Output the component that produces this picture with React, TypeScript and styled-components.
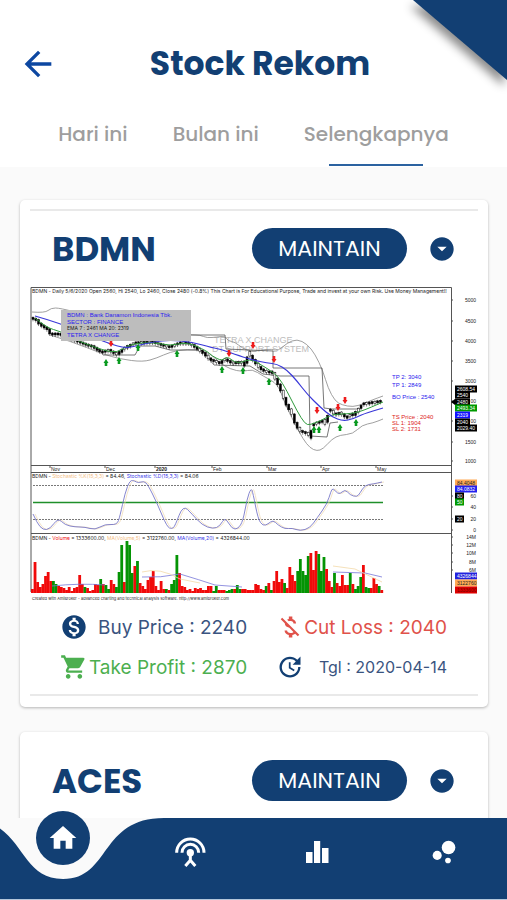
import React from "react";
import styled, { createGlobalStyle } from "styled-components";
import {
  MdArrowBack,
  MdArrowDropDownCircle,
  MdBubbleChart,
  MdHome,
  MdMoneyOff,
  MdMonetizationOn,
  MdShoppingCart,
  MdUpdate,
} from "react-icons/md";

const navy = "#123f73";
const heading = `Poppins, Inter, "Liberation Sans", sans-serif`;

const GlobalStyle = createGlobalStyle`
  * { box-sizing: border-box; }
  body { margin: 0; background: #fafafa; font-family: Inter, "Liberation Sans", sans-serif; }
  button { font: inherit; border: 0; padding: 0; background: none; cursor: pointer; }
`;

const Screen = styled.div`
  display: flex;
  flex-direction: column;
  height: 100vh;
  overflow: hidden;
  background: #fafafa;
`;

const Header = styled.header`
  position: relative;
  background: #fff;
  padding-top: 40px;
`;

const Corner = styled.svg`
  position: absolute;
  top: 0;
  right: 0;
  width: 94px;
  height: 80px;
  overflow: visible;
  filter: drop-shadow(-3px 6px 5px rgba(0, 0, 0, 0.45));
`;

const TitleRow = styled.div`
  display: flex;
  align-items: center;
  height: 47px;
  padding: 0 45px 0 18px;
`;

const BackButton = styled.button`
  display: flex;
  color: #0d47a1;
`;

const Title = styled.h1`
  flex: 1;
  margin: 0;
  text-align: center;
  font: 700 33px/48px ${heading};
  color: ${navy};
`;

const Tabs = styled.nav`
  display: flex;
  justify-content: center;
  gap: 45px;
  margin-top: 25px;
`;

const Tab = styled.button<{ $active?: boolean }>`
  display: flex;
  flex-direction: column;
  align-items: center;
  height: 55px;
  font: 500 20px/44px ${heading};
  color: #9e9e9e;

  &::after {
    content: "";
    width: 94px;
    height: 2px;
    margin-top: 8px;
    background: #2b62a0;
    display: ${(p) => (p.$active ? "block" : "none")};
  }
`;

const List = styled.main`
  flex: 1;
  min-height: 0;
  overflow-y: auto;
  scrollbar-width: none;
  display: flex;
  flex-direction: column;
  gap: 25px;
  padding: 33px 19px 0 20px;
`;

const Card = styled.article`
  flex: none;
  background: #fff;
  border-radius: 5px;
  padding: 9px 10px 11px;
  box-shadow: 0 1px 3px rgba(0, 0, 0, 0.28);
`;

const Divider = styled.hr<{ $hidden?: boolean }>`
  height: 2px;
  margin: 0;
  border: 0;
  background: ${(p) => (p.$hidden ? "transparent" : "#e9e9e9")};
`;

const CardHead = styled.div`
  display: flex;
  align-items: center;
  height: 75px;
  padding: 0 22px;
`;

const Ticker = styled.h2`
  flex: 1;
  margin: 0;
  font: 700 34px/48px ${heading};
  color: ${navy};
`;

const Pill = styled.button`
  width: 155px;
  height: 41px;
  border-radius: 21px;
  background: ${navy};
  color: #fff;
  font: 400 22px/41px ${heading};
`;

const Expand = styled.button`
  display: flex;
  margin-left: 21px;
  color: ${navy};
`;

const ChartSvg = styled.svg`
  display: block;
  width: 100%;
  height: auto;
  font-family: "Liberation Sans", sans-serif;
`;

const Facts = styled.div`
  display: grid;
  grid-template-columns: 188fr 170fr;
  column-gap: 29px;
  row-gap: 12px;
  padding: 10px 31px 13px 30px;
`;

const Fact = styled.div<{ $color: string; $small?: boolean }>`
  display: flex;
  align-items: center;
  justify-content: space-between;
  height: 28px;
  white-space: nowrap;
  font-size: ${(p) => (p.$small ? 16 : 19)}px;
  color: ${(p) => p.$color};

  svg { flex: none; }
`;

const BottomNav = styled.nav`
  position: relative;
  display: grid;
  grid-template-columns: repeat(4, 1fr);
  height: 82px;
  background: ${navy};
  border-bottom: 1px solid #b4c6da;
`;

const Notch = styled.svg`
  position: absolute;
  top: 0;
  left: calc(12.5% - 101px);
  width: 202px;
  height: 61px;
`;

const NavItem = styled.button`
  position: relative;
  display: flex;
  align-items: center;
  justify-content: center;
  height: 68px;
  color: #fff;
`;

const HomeItem = styled(NavItem)`
  justify-self: center;
  width: 54px;
  height: 54px;
  margin-top: -7px;
  border-radius: 50%;
  background: ${navy};
`;

type Point = [number, number];

const price: Point[] = [
  [2, 32], [8, 34], [12, 39], [20, 44], [22, 48], [30, 48], [50, 56], [58, 59], [65, 61], [72, 66], [80, 64],
  [87, 68], [95, 62], [105, 57], [123, 56], [133, 59], [140, 61], [150, 57], [160, 57], [168, 62], [176, 68],
  [182, 74], [190, 77], [196, 73], [203, 77], [215, 76], [220, 66], [225, 74], [232, 83], [238, 86], [244, 86],
  [250, 98], [254, 107], [258, 118], [264, 128], [268, 140], [273, 146], [280, 148], [284, 138], [290, 136],
  [296, 134], [301, 123], [306, 128], [312, 127], [317, 131], [325, 127], [333, 118], [340, 117], [353, 115],
];
const upperBand: Point[] = [
  [2, 26], [15, 27], [21, 22], [30, 22], [60, 30], [120, 45], [162, 49], [170, 49], [177, 52], [187, 51],
  [195, 50], [198, 55], [205, 56], [212, 62], [222, 66], [230, 64], [242, 63], [248, 65], [257, 57], [267, 53],
  [277, 58], [285, 68], [293, 85], [298, 102], [305, 115], [312, 119], [323, 121], [333, 118], [342, 114],
  [353, 110],
];
const lowerBand: Point[] = [
  [20, 49], [40, 55], [73, 68], [90, 73], [113, 76], [127, 72], [140, 66], [157, 63], [177, 65], [190, 77],
  [200, 83], [213, 86], [222, 83], [233, 90], [248, 98], [255, 118], [265, 138], [273, 153], [280, 162],
  [287, 165], [293, 163], [302, 153], [310, 149], [323, 148], [332, 139], [343, 137], [353, 133],
];
const upperSteps: Point[] = [
  [140, 49], [195, 49], [196, 63], [219, 64], [243, 65], [243, 82], [292, 82], [294, 122], [302, 123], [330, 123],
];
const lowerSteps: Point[] = [
  [73, 69], [105, 69], [110, 60], [125, 60], [140, 64], [172, 64], [184, 79], [220, 80], [233, 88], [250, 90],
  [279, 90], [280, 150], [297, 151], [300, 137], [308, 136],
];
const slowMa: Point[] = [
  [5, 30], [30, 37], [75, 56], [87, 60], [97, 62], [110, 59], [123, 56], [140, 54], [162, 56], [183, 62],
  [190, 63], [210, 70], [223, 74], [237, 77], [247, 78], [257, 84], [267, 95], [277, 108], [290, 121],
  [302, 131], [313, 135], [323, 133], [333, 128], [353, 122],
];
const fastMa: Point[] = [
  [5, 32], [17, 42], [30, 45], [50, 56], [73, 64], [87, 67], [100, 58], [123, 56], [140, 60], [157, 56],
  [177, 65], [182, 70], [192, 75], [197, 70], [207, 78], [220, 73], [228, 77], [238, 83], [248, 90], [257, 105],
  [267, 125], [275, 138], [280, 139], [292, 134], [303, 128], [317, 128], [330, 126], [353, 116],
];
const stochastic: Point[] = [
  [3, 228], [7, 237], [13, 244], [20, 243], [28, 232], [35, 239], [45, 241], [55, 241], [65, 244], [75, 238],
  [87, 239], [90, 230], [95, 207], [100, 194], [105, 195], [108, 197], [114, 195], [118, 199], [127, 217],
  [137, 241], [142, 243], [145, 240], [153, 219], [162, 228], [172, 239], [183, 243], [190, 240], [195, 231],
  [202, 243], [208, 243], [213, 235], [217, 213], [221, 202], [223, 207], [228, 233], [233, 240], [238, 238],
  [243, 234], [248, 239], [255, 243], [262, 242], [270, 245], [280, 242], [287, 232], [297, 218], [301, 205],
  [303, 202], [309, 209], [315, 203], [320, 209], [327, 211], [330, 207], [335, 199], [343, 198], [352, 196],
];
const buys: Point[] = [
  [76, 77], [89, 75], [108, 62], [147, 68], [192, 84], [213, 85], [239, 96], [284, 144], [289, 144], [310, 142],
  [326, 137],
];
const sells: Point[] = [[81, 57], [199, 67], [223, 59], [244, 73], [287, 124], [308, 121], [315, 114]];

/* Volume heights; the letter is the bar colour. */
const volume = (
  "4r 31r 11r 6r 9r 17r 21r 12r 12g 9g 7r 6r 5r 3r 6r 2r 5r 6r 18r 9r 6g 5r 2r 3r 9r 8r 14g 9r 8g 4g 13r 9r 6g " +
  "21g 48g 11r 52g 48g 20g 27r 32g 10r 7r 4r 13r 16r 22r 7r 3r 12r 4r 4g 3r 9g 13g 38g 20r 7r 6r 3r 4r 2r 5r 4r " +
  "5r 3r 3r 7r 7r 2g 7g 3r 3r 3r 2g 3g 4g 4r 8g 4g 4r 4r 3r " +
  "3r 3r 9r 8r 4r 3r 7g 10r 3g 12r 22r 11r 14r 10g 5r 26r 18r 12r 22g 34g 22g 18g 37g 40r 23r 42r 39g 22g 36g " +
  "24r 12r 6r 20g 10r 7r 18r 8r 8r 20g 9r 4g 7g 16g 28r 6g 5g 5r 15r 9r 7g 3r"
).split(" ");

const path = (pts: Point[], dx = 0) => pts.map(([x, y], i) => `${i ? "L" : "M"}${x + dx} ${y}`).join("");

/* Smooth line through the midpoints of the given points. */
const curve = (pts: Point[], dx = 0) => {
  const last = pts[pts.length - 1];
  const mids = pts.slice(1, -1).map(([x, y], i) => {
    const [nx, ny] = pts[i + 2];
    return `Q${x + dx} ${y} ${(x + nx) / 2 + dx} ${(y + ny) / 2}`;
  });
  return `M${pts[0][0] + dx} ${pts[0][1]}${mids.join("")}L${last[0] + dx} ${last[1]}`;
};

const priceAt = (x: number) => {
  const i = Math.max(1, price.findIndex((p) => p[0] >= x));
  const [ax, ay] = price[i - 1];
  const [bx, by] = price[i];
  return ay + ((by - ay) * (x - ax)) / (bx - ax);
};

const candles = Array.from({ length: 126 }, (_, i) => {
  const x = 3 + i * 2.78;
  const y = priceAt(x);
  const body = Math.max(2, Math.abs(priceAt(Math.min(x + 2.7, 352)) - y) + 1);
  return { x, y, body, hollow: x > 72 && i % 3 === 0 };
});

type Tag = { y: number; text: string; fill: string; w?: number; color?: string };
const tags: Tag[] = [
  { y: 103, text: "2608.54", fill: "#000" },
  { y: 109, text: "2540", fill: "#000", w: 15 },
  { y: 116, text: "2480", fill: "#000", w: 15 },
  { y: 122, text: "2493.34", fill: "#090" },
  { y: 129, text: "2319", fill: "#11f", w: 15 },
  { y: 136, text: "2040", fill: "#000", w: 15 },
  { y: 142, text: "2029.40", fill: "#000" },
  { y: 197, text: "84.4048", fill: "#fa5", color: "#222" },
  { y: 203, text: "84.0832", fill: "#22e" },
  { y: 210, text: "80", fill: "#000", w: 9 },
  { y: 216, text: "50", fill: "#090", w: 9 },
  { y: 233, text: "20", fill: "#000", w: 9 },
  { y: 290, text: "4326844", fill: "#22d" },
  { y: 297, text: "3122760", fill: "#fa5", color: "#222" },
  { y: 304, text: "1333600", fill: "#d00", color: "#700" },
];
const scale: [string, number][] = [
  ["5000", 14], ["4500", 35], ["4000", 55], ["3500", 75], ["3000", 95], ["00", 115], ["00", 135],
  ["1500", 156], ["1000", 175], ["60", 210], ["40", 221], ["20", 233], ["0", 244],
  ["14M", 251], ["12M", 259], ["10M", 267], ["8M", 276], ["6M", 284],
];
const months: [string, number][] = [
  ["Nov", 21], ["Dec", 76], ["2020", 126], ["Feb", 183], ["Mar", 238], ["Apr", 292], ["May", 347],
];

function StockChart() {
  return (
    <ChartSvg viewBox="0 0 448 317" role="img" aria-label="BDMN daily price chart">
      <g stroke="#555" fill="none">
        <path d="M1 306V1.5H421.5V307M1 179.5H421M1 186.5H421M1 247.5H421" />
        {scale.map(([t, y]) => <path key={t + y} d={`M421 ${y}h2`} />)}
        {months.map(([t, x]) => <path key={t} d={`M${x - 1} 180v2`} />)}
      </g>
      <g fontSize="9" fill="#bdbdbd">
        <text x="184" y="57">TETRA X CHANGE</text>
        <text x="182" y="66">DT SUPPORT SYSTEM</text>
      </g>
      <g fill="none" strokeWidth="0.8" stroke="#888">
        <path d={curve(upperBand)} />
        <path d={curve(lowerBand)} />
        <path d={path(upperSteps)} stroke="#555" />
        <path d={path(lowerSteps)} stroke="#555" />
      </g>
      {candles.map((c) => (
        <g key={c.x} stroke="#000" strokeWidth="0.5" fill={c.hollow ? "#fff" : "#000"}>
          <path d={`M${c.x} ${c.y - 2}v${c.body + 3}`} />
          <rect x={c.x - 1} y={c.y - 1} width="2" height={c.body} />
        </g>
      ))}
      <path d={curve(fastMa)} fill="none" stroke="#2f9a3c" />
      <path d={curve(slowMa)} fill="none" stroke="#3a38d8" strokeWidth="1.2" />
      {buys.map(([x, y]) => (
        <path key={x} d={`M${x} ${y - 4}l2.5 4h-1.2v3h-2.6v-3h-1.2z`} fill="#0a9a20" />
      ))}
      {sells.map(([x, y]) => (
        <path key={x} d={`M${x} ${y + 4}l2.5-4h-1.2v-3h-2.6v3h-1.2z`} fill="#ee1c1c" />
      ))}
      <rect x="31" y="24" width="130" height="31" fill="#bdbdbd" />
      <g fontSize="6" fill="#2b22ee">
        <text x="37" y="31">BDMN : Bank Danamon Indonesia Tbk.</text>
        <text x="37" y="38">SECTOR : FINANCE</text>
        <text x="37" y="44" fontSize="5" fill="#222" fontFamily="Inter">EMA 7 : 2461  MA 20: 2319</text>
        <text x="37" y="51">TETRA X CHANGE</text>
        <text x="362" y="93">TP 2: 3040</text>
        <text x="362" y="101">TP 1: 2849</text>
        <text x="362" y="113">BO Price : 2540</text>
      </g>
      <g fontSize="6" fill="#d22">
        <text x="362" y="133">TS Price : 2040</text>
        <text x="362" y="139">SL 1: 1904</text>
        <text x="362" y="145">SL 2: 1731</text>
      </g>
      <g fontSize="5" fill="#222">
        {scale.map(([t, y]) => <text key={t + y} x="446" y={y + 2} textAnchor="end">{t}</text>)}
        {months.map(([t, x]) => (
          <text key={t} x={x} y="185" fontWeight={t === "2020" ? 700 : 400}>{t}</text>
        ))}
      </g>
      <g fontSize="5" fill="#222" fontFamily="Inter">
        <text x="2" y="7">
          BDMN - Daily 5/6/2020 Open 2560, Hi 2540, Lo 2460, Close 2480 (-0.8%) This Chart is For Educational Purpose,
          Trade and invest at your own Risk. Use Money Management!!
        </text>
        <text x="2" y="192">
          BDMN - <tspan fill="#f3bd85">Stochastic %K(15,3,3)</tspan> = 84.46,{" "}
          <tspan fill="#3a38e8">Stochastic %D(15,3,3)</tspan> = 84.06
        </text>
        <text x="2" y="254">
          BDMN - <tspan fill="#e11">Volume</tspan> = 1333600.00, <tspan fill="#f3bd85">MA(Volume,5)</tspan> =
          3122760.00, <tspan fill="#3a38e8">MA(Volume,20)</tspan> = 4326844.00
        </text>
        <text x="2" y="314" fontSize="4">
          Created with AmiBroker - advanced charting and technical analysis software. http://www.amibroker.com
        </text>
      </g>
      <g stroke="#555" strokeDasharray="2 1" strokeWidth="0.8">
        <path d="M3 199.5H353M3 233.5H353" />
        <path d="M3 216.5H353" stroke="#1f8f2a" strokeDasharray="none" strokeWidth="1.4" />
      </g>
      <path d={curve(stochastic, 2)} fill="none" stroke="#f0dcb8" strokeWidth="0.8" />
      <path d={curve(stochastic)} fill="none" stroke="#7777c8" strokeWidth="0.9" />
      {volume.map((v, i) => {
        const h = parseInt(v, 10);
        return (
          <rect
            key={i}
            x={1 + i * (352 / volume.length)}
            y={307 - h}
            width="2.8"
            height={h}
            fill={v.endsWith("g") ? "#049404" : "#f00a0a"}
          />
        );
      })}
      <g fill="none" strokeWidth="0.8">
        <path
          d="M22 300Q50 297 75 299M112 291Q130 292 150 288Q170 294 185 299L212 301M303 286L335 287L352 291"
          stroke="#7777d8"
        />
        <path d="M112 286Q130 281 150 293L170 297M303 280L325 283L352 296" stroke="#f3d9a8" />
      </g>
      {tags.map((t) => (
        <g key={t.y} fontSize="5">
          <rect x="425" y={t.y - 3.5} width={t.w ?? 22} height="7" fill={t.fill} />
          <text x="427" y={t.y + 2} fill={t.color ?? "#fff"}>{t.text}</text>
        </g>
      ))}
      <path d="M425 113l-4 3l4 3z" fill="#000" />
    </ChartSvg>
  );
}

function AntennaIcon() {
  return (
    <svg width="31" height="30" viewBox="0 0 93 90" fill="none" stroke="currentColor" strokeWidth="9">
      <path d="M5 47a41 41 0 0 1 82 0M21 47a25 25 0 0 1 50 0" />
      <circle cx="46" cy="47" r="11" fill="currentColor" stroke="none" />
      <path d="M46 48v22M31 87l15-17L61 87" />
    </svg>
  );
}

function BarsIcon() {
  return (
    <svg width="24" height="24" viewBox="0 0 24 24" fill="currentColor">
      <path d="M1 12h6.500v11H1zM9 1h6.200v22H9zM17 8h6.500v15H17z" />
    </svg>
  );
}

function CardHeader({ ticker }: { ticker: string }) {
  return (
    <CardHead>
      <Ticker>{ticker}</Ticker>
      <Pill>MAINTAIN</Pill>
      <Expand aria-label={`Details for ${ticker}`}><MdArrowDropDownCircle size={28} /></Expand>
    </CardHead>
  );
}

export default function App() {
  return (
    <Screen>
      <GlobalStyle />
      <Header>
        <Corner viewBox="0 0 94 80" aria-hidden="true"><path d="M0 0H94V80Z" fill={navy} /></Corner>
        <TitleRow>
          <BackButton aria-label="Back"><MdArrowBack size={40} /></BackButton>
          <Title>Stock Rekom</Title>
        </TitleRow>
        <Tabs>
          <Tab>Hari ini</Tab>
          <Tab>Bulan ini</Tab>
          <Tab $active>Selengkapnya</Tab>
        </Tabs>
      </Header>
      <List>
        <Card>
          <Divider />
          <CardHeader ticker="BDMN" />
          <StockChart />
          <Facts>
            <Fact $color="#3a5480"><MdMonetizationOn size={28} color={navy} /><span>Buy Price : 2240</span></Fact>
            <Fact $color="#e0524a"><MdMoneyOff size={28} /><span>Cut Loss : 2040</span></Fact>
            <Fact $color="#4caf50"><MdShoppingCart size={28} /><span>Take Profit : 2870</span></Fact>
            <Fact $color="#3a5480" $small><MdUpdate size={28} color={navy} /><span>Tgl : 2020-04-14</span></Fact>
          </Facts>
          <Divider />
        </Card>
        <Card>
          <Divider $hidden />
          <CardHeader ticker="ACES" />
        </Card>
      </List>
      <BottomNav>
        <Notch viewBox="0 0 202 61" aria-hidden="true">
          <path d="M0 0C65 0 53 61 101 61S137 0 202 0Z" fill="#fafafa" />
        </Notch>
        <HomeItem aria-label="Home"><MdHome size={32} /></HomeItem>
        <NavItem aria-label="Signals"><AntennaIcon /></NavItem>
        <NavItem aria-label="Statistics"><BarsIcon /></NavItem>
        <NavItem aria-label="Community"><MdBubbleChart size={34} /></NavItem>
      </BottomNav>
    </Screen>
  );
}
